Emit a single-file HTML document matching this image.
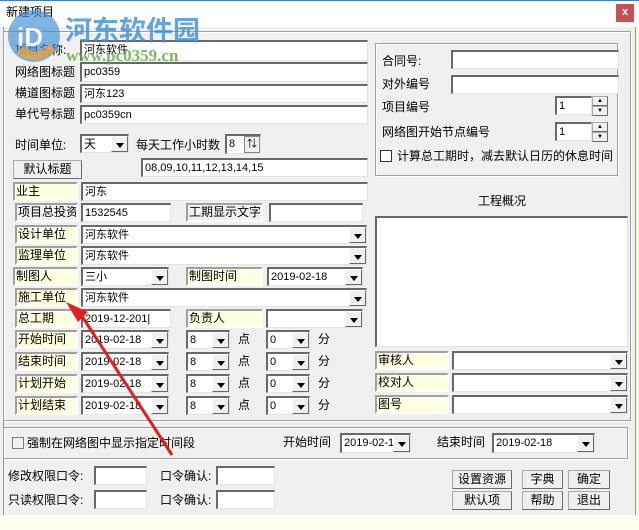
<!DOCTYPE html>
<html><head><meta charset="utf-8"><style>
*{box-sizing:border-box;margin:0;padding:0}
body{width:639px;height:530px;overflow:hidden;background:#f0f0f0;font-family:"Liberation Sans","Noto Sans CJK SC","WenQuanYi Zen Hei",sans-serif;font-size:12px;color:#000;position:relative}
.a{position:absolute;white-space:nowrap;line-height:18px}
.in{position:absolute;background:#fff;border:1px solid #a0a0a0;border-top:2px solid #696969;border-left:2px solid #696969;border-right-color:#e3e3e3;border-bottom-color:#e3e3e3;padding-left:2px;line-height:16px;font-size:11px;overflow:hidden;white-space:nowrap}
.y{position:absolute;background:#ffffe1;border:2px solid;border-color:#a0a0a0 #fff #fff #a0a0a0;line-height:15px;padding-left:1px;white-space:nowrap;overflow:hidden}
.g{position:absolute;background:#f0f0f0;border:2px solid;border-color:#a0a0a0 #fff #fff #a0a0a0;line-height:15px;padding-left:1px;white-space:nowrap;overflow:hidden}
.dd{position:absolute;right:0;top:0;bottom:0;width:17px;background:#f0f0f0;border:1px solid;border-color:#fff #696969 #696969 #fff}
.dd:after{content:"";position:absolute;left:4px;top:6px;border:4px solid transparent;border-top:5px solid #000;border-bottom:0}
.btn{position:absolute;border:1px solid #888;border-color:#aaa #6a6a6a #6a6a6a #aaa;background:#f0f0f0;text-align:center;line-height:16px}
.gb{position:absolute;border:1px solid #a0a0a0;box-shadow:inset 1px 1px 0 #fff,1px 1px 0 #fff}
</style></head><body>
<div style="position:absolute;left:0;top:0;width:639px;height:27px;background:#fff;border-top:1px solid #3a7bd5"></div>
<div class="a" style="left:6px;top:3px">新建项目</div>
<div style="position:absolute;left:616px;top:4px;width:18px;height:18px;background:#c75050;color:#fff;font-size:11px;text-align:center;line-height:17px;font-weight:bold">x</div>
<div style="position:absolute;left:635px;top:27px;width:4px;height:503px;background:#fffbe6;border-left:1px solid #999"></div>
<div style="position:absolute;left:0;top:515px;width:639px;height:15px;background:#fffff0"></div>
<div style="position:absolute;left:3px;top:27px;width:632px;height:488px;border-left:1px solid #999"></div>
<div class="gb" style="left:3px;top:31px;width:628px;height:390px"></div>

<div class="a" style="left:15px;top:41px">项目名称:</div><div class="in" style="left:80px;top:40px;width:288px;height:21px">河东软件</div>
<div class="a" style="left:15px;top:63px">网络图标题</div><div class="in" style="left:80px;top:62px;width:288px;height:20px">pc0359</div>
<div class="a" style="left:15px;top:84px">横道图标题</div><div class="in" style="left:80px;top:84px;width:288px;height:19px">河东123</div>
<div class="a" style="left:15px;top:105px">单代号标题</div><div class="in" style="left:80px;top:105px;width:288px;height:19px">pc0359cn</div>
<div class="a" style="left:15px;top:136px">时间单位:</div>
<div class="in" style="left:80px;top:134px;width:49px;height:19px;font-size:12px">天<div class="dd"></div></div>
<div class="a" style="left:136px;top:136px">每天工作小时数</div>
<div class="in" style="left:225px;top:134px;width:36px;height:20px">8<div style="position:absolute;right:0;top:0;width:16px;height:17px;background:#f0f0f0;border:1px solid #888;font-size:10px;line-height:15px;text-align:center">⇅</div></div>
<div class="btn" style="left:13px;top:160px;width:69px;height:19px;line-height:17px">默认标题</div>
<div class="in" style="left:141px;top:158px;width:227px;height:19px">08,09,10,11,12,13,14,15</div>
<div class="y" style="left:13px;top:182px;width:65px;height:19px">业主</div><div class="in" style="left:81px;top:182px;width:287px;height:19px">河东</div>
<div class="g" style="left:15px;top:203px;width:63px;height:19px">项目总投资</div><div class="in" style="left:81px;top:203px;width:90px;height:19px">1532545</div>
<div class="g" style="left:186px;top:203px;width:77px;height:19px">工期显示文字</div><div class="in" style="left:269px;top:203px;width:94px;height:19px"></div>
<div class="y" style="left:15px;top:225px;width:63px;height:19px">设计单位</div><div class="in" style="left:81px;top:225px;width:286px;height:19px">河东软件<div class="dd"></div></div>
<div class="y" style="left:15px;top:246px;width:63px;height:19px">监理单位</div><div class="in" style="left:81px;top:246px;width:286px;height:19px">河东软件<div class="dd"></div></div>
<div class="y" style="left:13px;top:267px;width:65px;height:19px">制图人</div><div class="in" style="left:81px;top:267px;width:88px;height:19px">三小<div class="dd"></div></div>
<div class="y" style="left:186px;top:267px;width:77px;height:19px">制图时间</div><div class="in" style="left:267px;top:267px;width:96px;height:19px">2019-02-18<div class="dd"></div></div>
<div class="y" style="left:15px;top:288px;width:63px;height:19px">施工单位</div><div class="in" style="left:81px;top:288px;width:286px;height:19px">河东软件<div class="dd"></div></div>
<div class="y" style="left:15px;top:309px;width:63px;height:19px">总工期</div><div class="in" style="left:81px;top:309px;width:90px;height:19px">2019-12-201|</div>
<div class="y" style="left:186px;top:309px;width:77px;height:19px">负责人</div><div class="in" style="left:266px;top:309px;width:97px;height:19px"><div class="dd"></div></div>

<div class="y" style="left:15px;top:330px;width:63px;height:19px">开始时间</div><div class="in" style="left:81px;top:330px;width:88px;height:19px">2019-02-18<div class="dd"></div></div>
<div class="in" style="left:186px;top:330px;width:44px;height:19px">8<div class="dd"></div></div><div class="a" style="left:238px;top:330px">点</div>
<div class="in" style="left:266px;top:330px;width:44px;height:19px">0<div class="dd"></div></div><div class="a" style="left:318px;top:330px">分</div>
<div class="y" style="left:15px;top:352px;width:63px;height:19px">结束时间</div><div class="in" style="left:81px;top:352px;width:88px;height:19px">2019-02-18<div class="dd"></div></div>
<div class="in" style="left:186px;top:352px;width:44px;height:19px">8<div class="dd"></div></div><div class="a" style="left:238px;top:352px">点</div>
<div class="in" style="left:266px;top:352px;width:44px;height:19px">0<div class="dd"></div></div><div class="a" style="left:318px;top:352px">分</div>
<div class="y" style="left:15px;top:374px;width:63px;height:19px">计划开始</div><div class="in" style="left:81px;top:374px;width:88px;height:19px">2019-02-18<div class="dd"></div></div>
<div class="in" style="left:186px;top:374px;width:44px;height:19px">8<div class="dd"></div></div><div class="a" style="left:238px;top:374px">点</div>
<div class="in" style="left:266px;top:374px;width:44px;height:19px">0<div class="dd"></div></div><div class="a" style="left:318px;top:374px">分</div>
<div class="y" style="left:15px;top:396px;width:63px;height:19px">计划结束</div><div class="in" style="left:81px;top:396px;width:88px;height:19px">2019-02-18<div class="dd"></div></div>
<div class="in" style="left:186px;top:396px;width:44px;height:19px">8<div class="dd"></div></div><div class="a" style="left:238px;top:396px">点</div>
<div class="in" style="left:266px;top:396px;width:44px;height:19px">0<div class="dd"></div></div><div class="a" style="left:318px;top:396px">分</div>

<div class="gb" style="left:375px;top:43px;width:243px;height:133px"></div>
<div class="a" style="left:382px;top:52px">合同号:</div><div class="in" style="left:451px;top:50px;width:168px;height:19px"></div>
<div class="a" style="left:382px;top:75px">对外编号</div><div class="in" style="left:451px;top:75px;width:168px;height:19px"></div>
<div class="a" style="left:382px;top:98px">项目编号</div><div class="in" style="left:555px;top:96px;width:37px;height:19px">1</div>
<div class="btn" style="left:592px;top:96px;width:16px;height:10px;font-size:6px;line-height:8px">▲</div><div class="btn" style="left:592px;top:106px;width:16px;height:10px;font-size:6px;line-height:8px">▼</div>
<div class="a" style="left:382px;top:123px">网络图开始节点编号</div><div class="in" style="left:555px;top:122px;width:37px;height:19px">1</div>
<div class="btn" style="left:592px;top:122px;width:16px;height:10px;font-size:6px;line-height:8px">▲</div><div class="btn" style="left:592px;top:132px;width:16px;height:10px;font-size:6px;line-height:8px">▼</div>
<div style="position:absolute;left:380px;top:150px;width:12px;height:12px;background:#fff;border:1px solid #333"></div>
<div class="a" style="left:397px;top:147px">计算总工期时，减去默认日历的休息时间</div>
<div class="a" style="left:478px;top:192px">工程概况</div>
<div class="in" style="left:375px;top:216px;width:253px;height:131px"></div>
<div class="y" style="left:375px;top:351px;width:74px;height:19px">审核人</div><div class="in" style="left:452px;top:351px;width:176px;height:19px"><div class="dd"></div></div>
<div class="y" style="left:375px;top:373px;width:74px;height:19px">校对人</div><div class="in" style="left:452px;top:373px;width:176px;height:19px"><div class="dd"></div></div>
<div class="y" style="left:375px;top:395px;width:74px;height:19px">图号</div><div class="in" style="left:452px;top:395px;width:176px;height:19px"><div class="dd"></div></div>

<div class="gb" style="left:3px;top:427px;width:625px;height:32px"></div>
<div style="position:absolute;left:12px;top:437px;width:12px;height:12px;border:1px solid #8a7a6a;background:#f0f0f0"></div>
<div class="a" style="left:27px;top:434px">强制在网络图中显示指定时间段</div>
<div class="a" style="left:283px;top:433px">开始时间</div><div class="in" style="left:340px;top:433px;width:71px;height:20px">2019-02-18<div class="dd"></div></div>
<div class="a" style="left:437px;top:433px">结束时间</div><div class="in" style="left:492px;top:433px;width:103px;height:20px">2019-02-18<div class="dd"></div></div>

<div class="a" style="left:8px;top:467px">修改权限口令:</div><div class="in" style="left:94px;top:466px;width:53px;height:19px"></div>
<div class="a" style="left:160px;top:467px">口令确认:</div><div class="in" style="left:216px;top:466px;width:59px;height:19px"></div>
<div class="a" style="left:8px;top:491px">只读权限口令:</div><div class="in" style="left:94px;top:490px;width:53px;height:19px"></div>
<div class="a" style="left:160px;top:491px">口令确认:</div><div class="in" style="left:216px;top:490px;width:59px;height:19px"></div>
<div class="btn" style="left:452px;top:470px;width:60px;height:19px">设置资源</div>
<div class="btn" style="left:522px;top:470px;width:41px;height:19px">字典</div>
<div class="btn" style="left:568px;top:470px;width:42px;height:19px">确定</div>
<div class="btn" style="left:452px;top:491px;width:60px;height:19px">默认项</div>
<div class="btn" style="left:522px;top:491px;width:41px;height:19px">帮助</div>
<div class="btn" style="left:568px;top:491px;width:42px;height:19px">退出</div>

<svg style="position:absolute;left:0;top:0" width="639" height="530">
<circle cx="34" cy="36" r="26" fill="#3d8fd6" opacity="0.65"/>
<path d="M16 52 Q34 68 56 50 L49 44 Q36 58 24 46Z" fill="#f0a040" opacity="0.8"/>
<text x="17" y="46" font-size="26" font-weight="bold" fill="#fff" opacity="0.9" font-family="Liberation Sans">iD</text>
<text x="65" y="40" font-size="27" font-weight="bold" fill="#3d8fd6" opacity="0.8" font-family="Noto Sans CJK SC,sans-serif">河东软件园</text>
<text x="66" y="61" font-size="17" font-weight="bold" fill="#5aa83a" opacity="0.8" font-family="Liberation Serif,serif">www.pc0359.cn</text>
<line x1="172" y1="455" x2="78" y2="310" stroke="#e02020" stroke-width="3"/>
<polygon points="66,302 88,312 78,322" fill="#e02020"/>
</svg>
</body></html>
